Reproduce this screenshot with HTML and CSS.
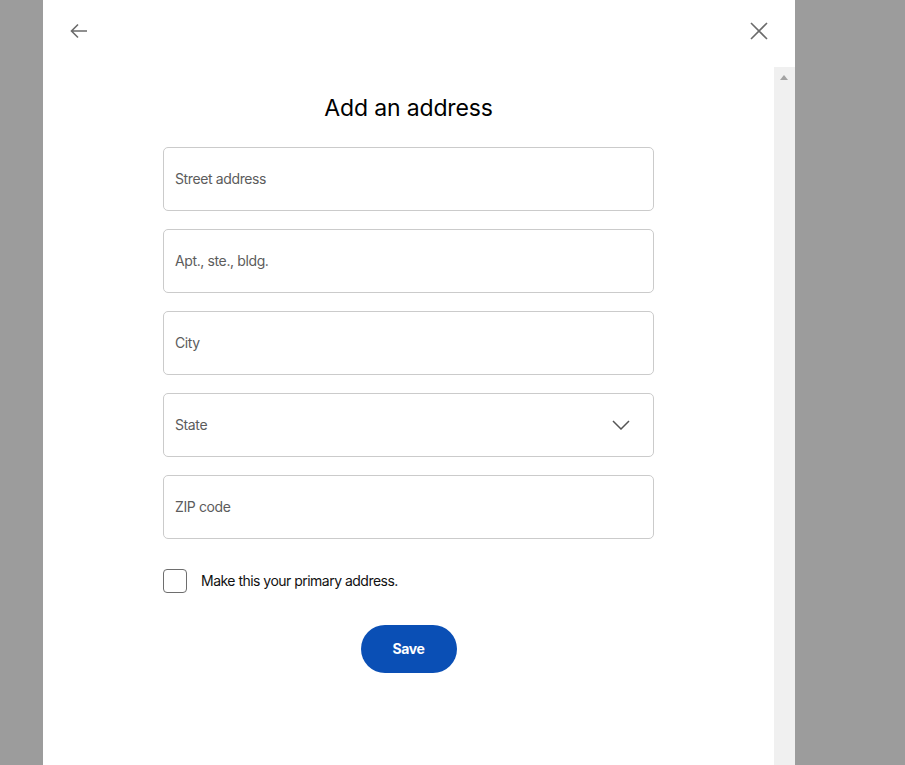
FILE: index.html
```html
<!DOCTYPE html>
<html>
<head>
<meta charset="utf-8">
<link rel="stylesheet" href="styles.css">
</head>
<body>
<div class="modal">
  <div class="modal-header">
    <button class="icon-btn back" aria-label="Back">
      <svg width="20" height="20" viewBox="0 0 20 20"><path d="M18 10H2.5M9 3.5L2.5 10L9 16.5" fill="none" stroke="#6b6b6b" stroke-width="1.6"/></svg>
    </button>
    <button class="icon-btn close" aria-label="Close">
      <svg width="18" height="18" viewBox="0 0 18 18"><path d="M1 1L17 17M17 1L1 17" fill="none" stroke="#6b6b6b" stroke-width="1.6"/></svg>
    </button>
  </div>
  <div class="modal-body">
    <div class="content">
      <h1 class="title">Add an address</h1>
      <form class="form">
        <div class="field"><span class="placeholder">Street address</span></div>
        <div class="field"><span class="placeholder">Apt., ste., bldg.</span></div>
        <div class="field"><span class="placeholder">City</span></div>
        <div class="field select"><span class="placeholder">State</span>
          <svg class="chev" width="18" height="10" viewBox="0 0 18 10"><path d="M1 1L9 9L17 1" fill="none" stroke="#555" stroke-width="1.5"/></svg>
        </div>
        <div class="field"><span class="placeholder">ZIP code</span></div>
        <label class="check-row"><span class="checkbox"></span><span class="check-label">Make this your primary address.</span></label>
        <div class="actions"><button type="button" class="save">Save</button></div>
      </form>
    </div>
    <div class="scrollbar"><span class="arrow-up"></span></div>
  </div>
</div>
</body>
</html>
```
FILE: styles.css
```css
html, body { margin: 0; padding: 0; }
body {
  background: #9c9c9c;
  font-family: Inter, "Noto Sans", "Liberation Sans", sans-serif;
  height: 765px;
  overflow: hidden;
}
.modal {
  margin-left: 43px;
  width: 752px;
  height: 765px;
  background: #fff;
  display: flex;
  flex-direction: column;
}
.modal-header {
  height: 67px;
  flex: none;
  display: flex;
  justify-content: space-between;
  align-items: flex-start;
  padding: 0 27px 0 26px;
}
.icon-btn {
  background: none;
  border: 0;
  padding: 0;
  display: flex;
  cursor: pointer;
}
.back { margin-top: 21px; }
.close { margin-top: 22px; }
.modal-body {
  flex: 1;
  display: flex;
  min-height: 0;
}
.content {
  flex: 1;
  display: flex;
  flex-direction: column;
  align-items: center;
}
.title {
  margin: 27px 0 0;
  font-size: 23px;
  line-height: 28px;
  font-weight: 400;
  color: #000;
  letter-spacing: -0.15px;
}
.form {
  margin-top: 25px;
  width: 491px;
  display: flex;
  flex-direction: column;
  gap: 18px;
}
.field {
  height: 64px;
  box-sizing: border-box;
  border: 1px solid #cbcbcb;
  border-radius: 5px;
  display: flex;
  align-items: center;
  justify-content: space-between;
  padding: 0 22px 0 11px;
}
.placeholder {
  font-size: 14px;
  line-height: 16px;
  color: #5c5c5c;
  letter-spacing: -0.38px;
}
.chev { margin-right: 1px; }
.check-row {
  margin-top: 12px;
  display: flex;
  align-items: center;
  gap: 14px;
}
.checkbox {
  width: 24px;
  height: 24px;
  box-sizing: border-box;
  border: 1px solid #6e6e6e;
  border-radius: 4px;
}
.check-label {
  font-size: 14px;
  line-height: 16px;
  color: #111;
  letter-spacing: -0.52px;
}
.actions {
  margin-top: 14px;
  display: flex;
  justify-content: center;
}
.save {
  width: 96px;
  height: 48px;
  border: 0;
  border-radius: 24px;
  background: #0a4fb5;
  color: #fff;
  font-family: inherit;
  font-size: 14px;
  font-weight: 700;
  letter-spacing: -0.4px;
  padding: 0 0 2px;
}
.scrollbar {
  width: 21px;
  flex: none;
  background: #f0f0f0;
  position: relative;
}
.arrow-up {
  position: absolute;
  left: 6px;
  top: 8px;
  width: 0;
  height: 0;
  border-left: 4px solid transparent;
  border-right: 4px solid transparent;
  border-bottom: 5px solid #a3a3a3;
}
```
